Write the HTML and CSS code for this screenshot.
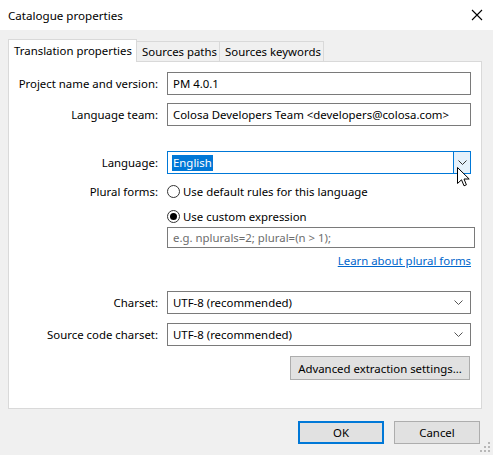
FILE: index.html
```html
<!DOCTYPE html>
<html>
<head>
<meta charset="utf-8">
<link rel="stylesheet" href="styles.css">
</head>
<body>
<div class="window">
  <div class="titlebar">
    <span class="title">Catalogue properties</span>
    <svg class="close" width="12" height="12" viewBox="0 0 12 12"><path d="M1 1L11 11M11 1L1 11" stroke="#000" stroke-width="1.1" fill="none"/></svg>
  </div>
  <div class="client">
    <div class="tabs">
      <div class="tab active">Translation properties</div>
      <div class="tab">Sources paths</div>
      <div class="tab">Sources keywords</div>
    </div>
    <div class="panel">
      <div class="row r1">
        <label class="lbl">Project name and version:</label>
        <div class="field input">PM 4.0.1</div>
      </div>
      <div class="row r2">
        <label class="lbl">Language team:</label>
        <div class="field input">Colosa Developers Team &lt;developers@colosa.com&gt;</div>
      </div>
      <div class="row r3">
        <label class="lbl">Language:</label>
        <div class="field combo focus">
          <span class="sel">English</span>
          <span class="dropbtn"><svg width="9" height="5" viewBox="0 0 9 5"><path d="M0.5 0.5L4.5 4.5L8.5 0.5" stroke="#333" fill="none"/></svg></span>
        </div>
      </div>
      <div class="row r4">
        <label class="lbl">Plural forms:</label>
        <div class="radio"><span class="dot"></span>Use default rules for this language</div>
      </div>
      <div class="row r5">
        <span class="lbl"></span>
        <div class="radio"><span class="dot on"></span>Use custom expression</div>
      </div>
      <div class="row r6">
        <span class="lbl"></span>
        <div class="field plural">e.g. nplurals=2; plural=(n &gt; 1);</div>
      </div>
      <div class="row r7">
        <span class="lbl"></span>
        <div class="linkwrap"><a class="link">Learn about plural forms</a></div>
      </div>
      <div class="row r8">
        <label class="lbl">Charset:</label>
        <div class="field combo">
          <span>UTF-8 (recommended)</span>
          <svg class="chev" width="9" height="5" viewBox="0 0 9 5"><path d="M0.5 0.5L4.5 4.5L8.5 0.5" stroke="#555" fill="none"/></svg>
        </div>
      </div>
      <div class="row r9">
        <label class="lbl">Source code charset:</label>
        <div class="field combo">
          <span>UTF-8 (recommended)</span>
          <svg class="chev" width="9" height="5" viewBox="0 0 9 5"><path d="M0.5 0.5L4.5 4.5L8.5 0.5" stroke="#555" fill="none"/></svg>
        </div>
      </div>
      <div class="row r10">
        <span class="lbl"></span>
        <div class="btnwrap"><div class="btn adv">Advanced extraction settings...</div></div>
      </div>
    </div>
    <div class="footer">
      <div class="btn ok">OK</div>
      <div class="btn cancel">Cancel</div>
    </div>
    <svg class="grip" width="10" height="10" viewBox="0 0 10 10" fill="#b8b8b8">
      <rect x="8" y="0" width="2" height="2"/>
      <rect x="4" y="4" width="2" height="2"/><rect x="8" y="4" width="2" height="2"/>
      <rect x="0" y="8" width="2" height="2"/><rect x="4" y="8" width="2" height="2"/><rect x="8" y="8" width="2" height="2"/>
    </svg>
  </div>
  <svg class="cursor" width="13" height="20" viewBox="0 0 13 20">
    <path d="M0.5 0.5V16.5L4.5 12.8L7 18.8L9.4 17.8L7 12H12.2Z" fill="#fff" stroke="#000" stroke-width="1" stroke-linejoin="miter"/>
  </svg>
</div>
</body>
</html>
```
FILE: styles.css
```css
* { box-sizing: border-box; }
html, body { margin: 0; padding: 0; }
body {
  width: 493px;
  height: 455px;
  overflow: hidden;
  font-family: "Noto Sans", "Open Sans", sans-serif;
  font-size: 11.4px;
  color: #000;
  background: #f0f0f0;
  white-space: nowrap;
}
.window { position: relative; width: 493px; height: 455px; display: flex; flex-direction: column; }
.titlebar {
  height: 30px;
  flex: none;
  background: #fff;
  display: flex;
  align-items: center;
  justify-content: space-between;
  padding: 0 10px 0 8px;
}
.title { font-size: 11.6px; }
.client { position: relative; flex: 1; padding: 9px 11px 0 8px; }
.tabs { display: flex; align-items: flex-end; height: 22px; position: relative; z-index: 2; }
.tab {
  height: 20px;
  padding: 0 5px;
  border: 1px solid #d9d9d9;
  border-bottom: none;
  border-left: none;
  background: #f0f0f0;
  line-height: 19px;
  text-align: center;
}
.tab.active {
  height: 23px;
  margin-bottom: -1px;
  background: #fff;
  border-left: 1px solid #d9d9d9;
  line-height: 21px;
  width: 129px;
}
.tabs .tab:nth-child(2) { width: 83px; }
.tabs .tab:nth-child(3) { width: 104px; }
.panel {
  background: #fff;
  border: 1px solid #d9d9d9;
  height: 348px;
  padding-top: 10px;
  display: flex;
  flex-direction: column;
}
.row { display: flex; align-items: center; }
.lbl { width: 150px; text-align: right; padding-right: 1px; flex: none; margin-right: 8px; }
.field {
  width: 304px;
  height: 23px;
  border: 1px solid #7a7a7a;
  background: #fff;
  display: flex;
  align-items: center;
  padding-left: 5px;
}
.r2 { margin-top: 8px; }
.r3 { margin-top: 25px; }
.combo.focus { border-color: #0078d7; padding-left: 4px; }
.combo { justify-content: space-between; padding-right: 0; }
.sel { background: #0078d7; color: #fff; padding: 0 1px; line-height: 16px; }
.dropbtn {
  width: 17px;
  height: 21px;
  border-left: 1px solid #0078d7;
  background: #e5f1fb;
  display: flex;
  align-items: center;
  justify-content: center;
}
.chev { margin-right: 7px; }
.r4 { margin-top: 9px; height: 16px; }
.r5 { margin-top: 9px; height: 16px; }
.radio { display: flex; align-items: center; }
.dot {
  width: 13px;
  height: 13px;
  border: 1px solid #333;
  border-radius: 50%;
  margin-right: 3px;
  position: relative;
  background: #fff;
}
.dot.on::after {
  content: "";
  position: absolute;
  left: 2px; top: 2px;
  width: 7px; height: 7px;
  border-radius: 50%;
  background: #000;
}
.r6 { margin-top: 3px; }
.plural { width: 308px; height: 21px; color: #6d6d6d; }
.r7 { margin-top: 5px; }
.linkwrap { width: 304px; text-align: right; }
.link { color: #0066cc; text-decoration: underline; }
.r8 { margin-top: 23px; }
.r9 { margin-top: 9px; }
.r10 { margin-top: 10px; }
.btnwrap { width: 303px; display: flex; justify-content: flex-end; }
.btn {
  height: 24px;
  border: 1px solid #adadad;
  background: #e1e1e1;
  display: flex;
  align-items: center;
  justify-content: center;
}
.adv { width: 180px; }
.footer { display: flex; justify-content: flex-end; gap: 10px; margin-top: 12px; padding-right: 2px; }
.ok, .cancel { width: 86px; height: 23px; }
.ok { border: 2px solid #0078d7; }
.grip { position: absolute; right: 3px; bottom: 3px; }
.cursor { position: absolute; left: 457px; top: 167px; }
```
